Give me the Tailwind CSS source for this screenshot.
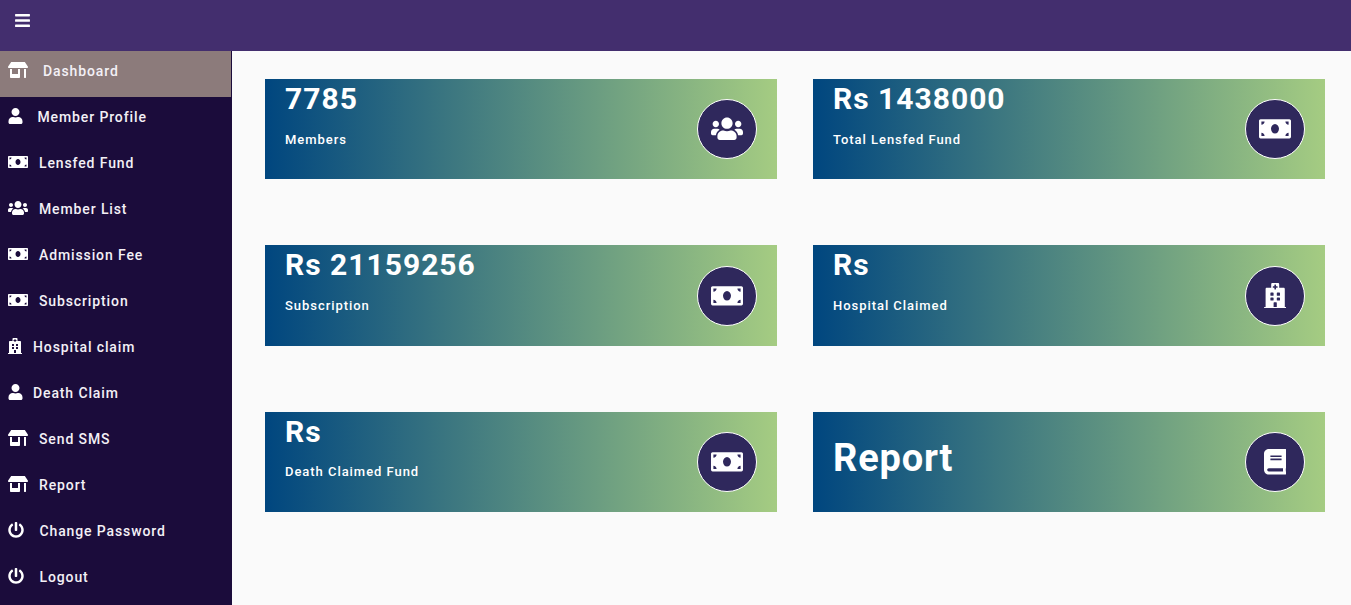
<!DOCTYPE html>
<html>
<head>
<meta charset="utf-8">
<script src="https://cdn.jsdelivr.net/npm/@tailwindcss/browser@4"></script>
</head>
<body class="m-0 h-[605px] w-[1351px] overflow-hidden bg-[#fafafa] font-['Roboto',sans-serif] text-white">
<header class="flex h-[51px] items-start bg-[#432e6e] pl-[15px] pt-[12px]">
  <svg class="h-[17px] w-[15px]" viewBox="0 0 448 512" fill="#fff"><path d="M16 132h416c8.837 0 16-7.163 16-16V76c0-8.837-7.163-16-16-16H16C7.163 60 0 67.163 0 76v40c0 8.837 7.163 16 16 16zm0 160h416c8.837 0 16-7.163 16-16v-40c0-8.837-7.163-16-16-16H16c-8.837 0-16 7.163-16 16v40c0 8.837 7.163 16 16 16zm0 160h416c8.837 0 16-7.163 16-16v-40c0-8.837-7.163-16-16-16H16c-8.837 0-16 7.163-16 16v40c0 8.837 7.163 16 16 16z"/></svg>
</header>
<div class="flex h-[554px]">
  <nav class="h-full w-[232px] shrink-0 bg-[#1b0c3b] text-[14px] font-medium tracking-[0.88px] text-[#f3f0f6]">
    <a class="flex h-[46px] w-[231px] items-center bg-[#8c7b7b] pb-[6px] pl-[8px]"><svg class="mb-[2px] h-[16px] w-[20px]" viewBox="0 0 640 512" fill="#fff"><path d="M320 384H128V224H64v256c0 17.7 14.3 32 32 32h256c17.7 0 32-14.3 32-32V224h-64v160zm314.6-241.8l-85.3-128c-6-8.9-16-14.2-26.7-14.2H117.4c-10.7 0-20.7 5.3-26.6 14.2l-85.3 128c-14.2 21.3 1 49.8 26.6 49.8H608c25.5 0 40.7-28.5 26.6-49.8zM512 496c0 8.8 7.2 16 16 16h32c8.8 0 16-7.2 16-16V224h-64v272z"/></svg><span class="ml-[15px]">Dashboard</span></a>
    <a class="flex h-[46px] items-center pb-[6px] pl-[8px]"><svg class="mb-[2px] h-[16px] w-[15px]" viewBox="0 0 448 512" fill="#fff"><path d="M224 256c70.7 0 128-57.3 128-128S294.7 0 224 0 96 57.3 96 128s57.3 128 128 128zm89.6 32h-16.7c-22.2 10.2-46.9 16-72.9 16s-50.6-5.8-72.9-16h-16.7C60.2 288 0 348.2 0 422.4V464c0 26.5 21.5 48 48 48h352c26.5 0 48-21.5 48-48v-41.6c0-74.2-60.2-134.4-134.4-134.4z"/></svg><span class="ml-[14.5px]">Member Profile</span></a>
    <a class="flex h-[46px] items-center pb-[6px] pl-[8px]"><svg class="mb-[2px] h-[16px] w-[20px]" viewBox="0 0 640 512" fill="#fff"><path d="M608 64H32C14.33 64 0 78.33 0 96v320c0 17.67 14.33 32 32 32h576c17.67 0 32-14.33 32-32V96c0-17.67-14.33-32-32-32zM48 400v-64c35.35 0 64 28.65 64 64H48zm0-224v-64h64c0 35.35-28.65 64-64 64zm272 176c-44.19 0-80-42.99-80-96 0-53.02 35.82-96 80-96s80 42.98 80 96c0 53.03-35.83 96-80 96zm272 48h-64c0-35.35 28.65-64 64-64v64zm0-224c-35.35 0-64-28.65-64-64h64v64z"/></svg><span class="ml-[11px]">Lensfed Fund</span></a>
    <a class="flex h-[46px] items-center pb-[6px] pl-[8px]"><svg class="mb-[2px] h-[16px] w-[20px]" viewBox="0 0 640 512" fill="#fff"><path d="M96 224c35.3 0 64-28.7 64-64s-28.7-64-64-64-64 28.7-64 64 28.7 64 64 64zm448 0c35.3 0 64-28.7 64-64s-28.7-64-64-64-64 28.7-64 64 28.7 64 64 64zm32 32h-64c-17.6 0-33.5 7.1-45.1 18.6 40.3 22.1 68.9 62 75.1 109.4h66c17.7 0 32-14.3 32-32v-32c0-35.3-28.7-64-64-64zm-256 0c61.9 0 112-50.1 112-112S381.9 32 320 32 208 82.1 208 144s50.1 112 112 112zm76.8 32h-8.3c-20.8 10-43.9 16-68.5 16s-47.6-6-68.5-16h-8.3C179.6 288 128 339.6 128 403.2V432c0 26.5 21.5 48 48 48h288c26.5 0 48-21.5 48-48v-28.8c0-63.6-51.6-115.2-115.2-115.2zm-223.7-13.4C161.5 263.1 145.6 256 128 256H64c-35.3 0-64 28.7-64 64v32c0 17.7 14.3 32 32 32h65.9c6.3-47.4 34.9-87.3 75.2-109.4z"/></svg><span class="ml-[11px]">Member List</span></a>
    <a class="flex h-[46px] items-center pb-[6px] pl-[8px]"><svg class="mb-[2px] h-[16px] w-[20px]" viewBox="0 0 640 512" fill="#fff"><path d="M608 64H32C14.33 64 0 78.33 0 96v320c0 17.67 14.33 32 32 32h576c17.67 0 32-14.33 32-32V96c0-17.67-14.33-32-32-32zM48 400v-64c35.35 0 64 28.65 64 64H48zm0-224v-64h64c0 35.35-28.65 64-64 64zm272 176c-44.19 0-80-42.99-80-96 0-53.02 35.82-96 80-96s80 42.98 80 96c0 53.03-35.83 96-80 96zm272 48h-64c0-35.35 28.65-64 64-64v64zm0-224c-35.35 0-64-28.65-64-64h64v64z"/></svg><span class="ml-[11px]">Admission Fee</span></a>
    <a class="flex h-[46px] items-center pb-[6px] pl-[8px]"><svg class="mb-[2px] h-[16px] w-[20px]" viewBox="0 0 640 512" fill="#fff"><path d="M608 64H32C14.33 64 0 78.33 0 96v320c0 17.67 14.33 32 32 32h576c17.67 0 32-14.33 32-32V96c0-17.67-14.33-32-32-32zM48 400v-64c35.35 0 64 28.65 64 64H48zm0-224v-64h64c0 35.35-28.65 64-64 64zm272 176c-44.19 0-80-42.99-80-96 0-53.02 35.82-96 80-96s80 42.98 80 96c0 53.03-35.83 96-80 96zm272 48h-64c0-35.35 28.65-64 64-64v64zm0-224c-35.35 0-64-28.65-64-64h64v64z"/></svg><span class="ml-[11px]">Subscription</span></a>
    <a class="flex h-[46px] items-center pb-[6px] pl-[8px]"><svg class="mb-[2px] h-[16px] w-[14px]" viewBox="0 0 448 512" fill="#fff"><path d="M448 492v20H0v-20c0-6.627 5.373-12 12-12h20V120c0-13.255 10.745-24 24-24h88V24c0-13.255 10.745-24 24-24h112c13.255 0 24 10.745 24 24v72h88c13.255 0 24 10.745 24 24v360h20c6.627 0 12 5.373 12 12zM308 192h-40c-6.627 0-12 5.373-12 12v40c0 6.627 5.373 12 12 12h40c6.627 0 12-5.373 12-12v-40c0-6.627-5.373-12-12-12zm-168 64h40c6.627 0 12-5.373 12-12v-40c0-6.627-5.373-12-12-12h-40c-6.627 0-12 5.373-12 12v40c0 6.627 5.373 12 12 12zm104 128h-40c-6.627 0-12 5.373-12 12v84h64v-84c0-6.627-5.373-12-12-12zm64-96h-40c-6.627 0-12 5.373-12 12v40c0 6.627 5.373 12 12 12h40c6.627 0 12-5.373 12-12v-40c0-6.627-5.373-12-12-12zm-116 12c0-6.627-5.373-12-12-12h-40c-6.627 0-12 5.373-12 12v40c0 6.627 5.373 12 12 12h40c6.627 0 12-5.373 12-12v-40zM182 96h26v26a6 6 0 0 0 6 6h20a6 6 0 0 0 6-6V96h26a6 6 0 0 0 6-6V70a6 6 0 0 0-6-6h-26V38a6 6 0 0 0-6-6h-20a6 6 0 0 0-6 6v26h-26a6 6 0 0 0-6 6v20a6 6 0 0 0 6 6z"/></svg><span class="ml-[11px]">Hospital claim</span></a>
    <a class="flex h-[46px] items-center pb-[6px] pl-[8px]"><svg class="mb-[2px] h-[16px] w-[15px]" viewBox="0 0 448 512" fill="#fff"><path d="M224 256c70.7 0 128-57.3 128-128S294.7 0 224 0 96 57.3 96 128s57.3 128 128 128zm89.6 32h-16.7c-22.2 10.2-46.9 16-72.9 16s-50.6-5.8-72.9-16h-16.7C60.2 288 0 348.2 0 422.4V464c0 26.5 21.5 48 48 48h352c26.5 0 48-21.5 48-48v-41.6c0-74.2-60.2-134.4-134.4-134.4z"/></svg><span class="ml-[10px]">Death Claim</span></a>
    <a class="flex h-[46px] items-center pb-[6px] pl-[8px]"><svg class="mb-[2px] h-[16px] w-[20px]" viewBox="0 0 640 512" fill="#fff"><path d="M320 384H128V224H64v256c0 17.7 14.3 32 32 32h256c17.7 0 32-14.3 32-32V224h-64v160zm314.6-241.8l-85.3-128c-6-8.9-16-14.2-26.7-14.2H117.4c-10.7 0-20.7 5.3-26.6 14.2l-85.3 128c-14.2 21.3 1 49.8 26.6 49.8H608c25.5 0 40.7-28.5 26.6-49.8zM512 496c0 8.8 7.2 16 16 16h32c8.8 0 16-7.2 16-16V224h-64v272z"/></svg><span class="ml-[11px]">Send SMS</span></a>
    <a class="flex h-[46px] items-center pb-[6px] pl-[8px]"><svg class="mb-[2px] h-[16px] w-[20px]" viewBox="0 0 640 512" fill="#fff"><path d="M320 384H128V224H64v256c0 17.7 14.3 32 32 32h256c17.7 0 32-14.3 32-32V224h-64v160zm314.6-241.8l-85.3-128c-6-8.9-16-14.2-26.7-14.2H117.4c-10.7 0-20.7 5.3-26.6 14.2l-85.3 128c-14.2 21.3 1 49.8 26.6 49.8H608c25.5 0 40.7-28.5 26.6-49.8zM512 496c0 8.8 7.2 16 16 16h32c8.8 0 16-7.2 16-16V224h-64v272z"/></svg><span class="ml-[11px]">Report</span></a>
    <a class="flex h-[46px] items-center pb-[6px] pl-[8px]"><svg class="mb-[2px] h-[16px] w-[16px]" viewBox="0 0 512 512" fill="#fff"><path d="M400 54.1c63 45 104 118.6 104 201.9 0 136.8-110.8 247.7-247.5 248C120 504.3 8.2 393 8 256.4 7.9 173.1 48.9 99.3 111.8 54.2c11.7-8.3 28-4.8 35 7.7L162.6 90c5.9 10.5 3.1 23.8-6.6 31-41.5 30.8-68 79.6-68 134.9-.1 92.3 74.5 168.1 168 168.1 91.6 0 168.6-74.2 168-169.1-.3-51.8-24.7-101.8-68.1-134-9.7-7.2-12.4-20.5-6.5-30.9l15.8-28.1c7-12.4 23.2-16.1 34.8-7.8zM296 264V24c0-13.3-10.7-24-24-24h-32c-13.3 0-24 10.7-24 24v240c0 13.3 10.7 24 24 24h32c13.3 0 24-10.7 24-24z"/></svg><span class="ml-[15.5px]">Change Password</span></a>
    <a class="flex h-[46px] items-center pb-[6px] pl-[8px]"><svg class="mb-[2px] h-[16px] w-[16px]" viewBox="0 0 512 512" fill="#fff"><path d="M400 54.1c63 45 104 118.6 104 201.9 0 136.8-110.8 247.7-247.5 248C120 504.3 8.2 393 8 256.4 7.9 173.1 48.9 99.3 111.8 54.2c11.7-8.3 28-4.8 35 7.7L162.6 90c5.9 10.5 3.1 23.8-6.6 31-41.5 30.8-68 79.6-68 134.9-.1 92.3 74.5 168.1 168 168.1 91.6 0 168.6-74.2 168-169.1-.3-51.8-24.7-101.8-68.1-134-9.7-7.2-12.4-20.5-6.5-30.9l15.8-28.1c7-12.4 23.2-16.1 34.8-7.8zM296 264V24c0-13.3-10.7-24-24-24h-32c-13.3 0-24 10.7-24 24v240c0 13.3 10.7 24 24 24h32c13.3 0 24-10.7 24-24z"/></svg><span class="ml-[15.5px]">Logout</span></a>
  </nav>
  <main class="grid flex-1 grid-cols-2 content-start gap-x-[36px] gap-y-[66.2px] pl-[33px] pr-[26px] pt-[28px]">
    <div class="flex h-[100.2px] items-center justify-between bg-linear-to-r/srgb from-[#00467f] to-[#a5cc82] pl-[20px] pr-[20px]">
      <div class="self-start"><div class="text-[30px] font-bold leading-[39px] tracking-[1px]">7785</div><div class="mt-[12.6px] text-[13px] font-medium leading-[18px] tracking-[0.95px]">Members</div></div>
      <div class="mt-[0.4px] flex h-[60px] w-[60px] items-center justify-center rounded-full border border-white bg-[#2f285c]"><svg class="h-[25.6px] w-[32px]" viewBox="0 0 640 512" fill="#fff"><path d="M96 224c35.3 0 64-28.7 64-64s-28.7-64-64-64-64 28.7-64 64 28.7 64 64 64zm448 0c35.3 0 64-28.7 64-64s-28.7-64-64-64-64 28.7-64 64 28.7 64 64 64zm32 32h-64c-17.6 0-33.5 7.1-45.1 18.6 40.3 22.1 68.9 62 75.1 109.4h66c17.7 0 32-14.3 32-32v-32c0-35.3-28.7-64-64-64zm-256 0c61.9 0 112-50.1 112-112S381.9 32 320 32 208 82.1 208 144s50.1 112 112 112zm76.8 32h-8.3c-20.8 10-43.9 16-68.5 16s-47.6-6-68.5-16h-8.3C179.6 288 128 339.6 128 403.2V432c0 26.5 21.5 48 48 48h288c26.5 0 48-21.5 48-48v-28.8c0-63.6-51.6-115.2-115.2-115.2zm-223.7-13.4C161.5 263.1 145.6 256 128 256H64c-35.3 0-64 28.7-64 64v32c0 17.7 14.3 32 32 32h65.9c6.3-47.4 34.9-87.3 75.2-109.4z"/></svg></div>
    </div>
    <div class="flex h-[100.2px] items-center justify-between bg-linear-to-r/srgb from-[#00467f] to-[#a5cc82] pl-[20px] pr-[20px]">
      <div class="self-start"><div class="text-[30px] font-bold leading-[39px] tracking-[1px]">Rs 1438000</div><div class="mt-[12.6px] text-[13px] font-medium leading-[18px] tracking-[0.95px]">Total Lensfed Fund</div></div>
      <div class="mt-[0.4px] flex h-[60px] w-[60px] items-center justify-center rounded-full border border-white bg-[#2f285c]"><svg class="h-[25.6px] w-[32px]" viewBox="0 0 640 512" fill="#fff"><path d="M608 64H32C14.33 64 0 78.33 0 96v320c0 17.67 14.33 32 32 32h576c17.67 0 32-14.33 32-32V96c0-17.67-14.33-32-32-32zM48 400v-64c35.35 0 64 28.65 64 64H48zm0-224v-64h64c0 35.35-28.65 64-64 64zm272 176c-44.19 0-80-42.99-80-96 0-53.02 35.82-96 80-96s80 42.98 80 96c0 53.03-35.83 96-80 96zm272 48h-64c0-35.35 28.65-64 64-64v64zm0-224c-35.35 0-64-28.65-64-64h64v64z"/></svg></div>
    </div>
    <div class="flex h-[100.2px] items-center justify-between bg-linear-to-r/srgb from-[#00467f] to-[#a5cc82] pl-[20px] pr-[20px]">
      <div class="self-start"><div class="text-[30px] font-bold leading-[39px] tracking-[1px]">Rs 21159256</div><div class="mt-[12.6px] text-[13px] font-medium leading-[18px] tracking-[0.95px]">Subscription</div></div>
      <div class="mt-[0.4px] flex h-[60px] w-[60px] items-center justify-center rounded-full border border-white bg-[#2f285c]"><svg class="h-[25.6px] w-[32px]" viewBox="0 0 640 512" fill="#fff"><path d="M608 64H32C14.33 64 0 78.33 0 96v320c0 17.67 14.33 32 32 32h576c17.67 0 32-14.33 32-32V96c0-17.67-14.33-32-32-32zM48 400v-64c35.35 0 64 28.65 64 64H48zm0-224v-64h64c0 35.35-28.65 64-64 64zm272 176c-44.19 0-80-42.99-80-96 0-53.02 35.82-96 80-96s80 42.98 80 96c0 53.03-35.83 96-80 96zm272 48h-64c0-35.35 28.65-64 64-64v64zm0-224c-35.35 0-64-28.65-64-64h64v64z"/></svg></div>
    </div>
    <div class="flex h-[100.2px] items-center justify-between bg-linear-to-r/srgb from-[#00467f] to-[#a5cc82] pl-[20px] pr-[20px]">
      <div class="self-start"><div class="text-[30px] font-bold leading-[39px] tracking-[1px]">Rs</div><div class="mt-[12.6px] text-[13px] font-medium leading-[18px] tracking-[0.95px]">Hospital Claimed</div></div>
      <div class="mt-[0.4px] flex h-[60px] w-[60px] items-center justify-center rounded-full border border-white bg-[#2f285c]"><svg class="h-[25.6px] w-[22.4px]" viewBox="0 0 448 512" fill="#fff"><path d="M448 492v20H0v-20c0-6.627 5.373-12 12-12h20V120c0-13.255 10.745-24 24-24h88V24c0-13.255 10.745-24 24-24h112c13.255 0 24 10.745 24 24v72h88c13.255 0 24 10.745 24 24v360h20c6.627 0 12 5.373 12 12zM308 192h-40c-6.627 0-12 5.373-12 12v40c0 6.627 5.373 12 12 12h40c6.627 0 12-5.373 12-12v-40c0-6.627-5.373-12-12-12zm-168 64h40c6.627 0 12-5.373 12-12v-40c0-6.627-5.373-12-12-12h-40c-6.627 0-12 5.373-12 12v40c0 6.627 5.373 12 12 12zm104 128h-40c-6.627 0-12 5.373-12 12v84h64v-84c0-6.627-5.373-12-12-12zm64-96h-40c-6.627 0-12 5.373-12 12v40c0 6.627 5.373 12 12 12h40c6.627 0 12-5.373 12-12v-40c0-6.627-5.373-12-12-12zm-116 12c0-6.627-5.373-12-12-12h-40c-6.627 0-12 5.373-12 12v40c0 6.627 5.373 12 12 12h40c6.627 0 12-5.373 12-12v-40zM182 96h26v26a6 6 0 0 0 6 6h20a6 6 0 0 0 6-6V96h26a6 6 0 0 0 6-6V70a6 6 0 0 0-6-6h-26V38a6 6 0 0 0-6-6h-20a6 6 0 0 0-6 6v26h-26a6 6 0 0 0-6 6v20a6 6 0 0 0 6 6z"/></svg></div>
    </div>
    <div class="flex h-[100.2px] items-center justify-between bg-linear-to-r/srgb from-[#00467f] to-[#a5cc82] pl-[20px] pr-[20px]">
      <div class="self-start"><div class="text-[30px] font-bold leading-[39px] tracking-[1px]">Rs</div><div class="mt-[12.6px] text-[13px] font-medium leading-[18px] tracking-[0.95px]">Death Claimed Fund</div></div>
      <div class="mt-[0.4px] flex h-[60px] w-[60px] items-center justify-center rounded-full border border-white bg-[#2f285c]"><svg class="h-[25.6px] w-[32px]" viewBox="0 0 640 512" fill="#fff"><path d="M608 64H32C14.33 64 0 78.33 0 96v320c0 17.67 14.33 32 32 32h576c17.67 0 32-14.33 32-32V96c0-17.67-14.33-32-32-32zM48 400v-64c35.35 0 64 28.65 64 64H48zm0-224v-64h64c0 35.35-28.65 64-64 64zm272 176c-44.19 0-80-42.99-80-96 0-53.02 35.82-96 80-96s80 42.98 80 96c0 53.03-35.83 96-80 96zm272 48h-64c0-35.35 28.65-64 64-64v64zm0-224c-35.35 0-64-28.65-64-64h64v64z"/></svg></div>
    </div>
    <div class="flex h-[100.2px] items-center justify-between bg-linear-to-r/srgb from-[#00467f] to-[#a5cc82] pl-[20px] pr-[20px]">
      <div class="mb-[8px] text-[38px] font-bold leading-[46px] tracking-[0.8px]">Report</div>
      <div class="mt-[0.4px] flex h-[60px] w-[60px] items-center justify-center rounded-full border border-white bg-[#2f285c]"><svg class="h-[25.6px] w-[22.4px]" viewBox="0 0 448 512" fill="#fff"><path d="M448 360V24c0-13.3-10.7-24-24-24H96C43 0 0 43 0 96v320c0 53 43 96 96 96h328c13.3 0 24-10.7 24-24v-16c0-7.5-3.5-14.3-8.9-18.7-4.2-15.4-4.2-59.3 0-74.7 5.4-4.3 8.9-11.1 8.9-18.6zM128 134c0-3.3 2.7-6 6-6h212c3.3 0 6 2.7 6 6v20c0 3.3-2.7 6-6 6H134c-3.3 0-6-2.7-6-6v-20zm0 64c0-3.3 2.7-6 6-6h212c3.3 0 6 2.7 6 6v20c0 3.3-2.7 6-6 6H134c-3.3 0-6-2.7-6-6v-20zm253.4 250H96c-17.7 0-32-14.3-32-32 0-17.6 14.4-32 32-32h285.4c-1.9 17.1-1.9 46.9 0 64z"/></svg></div>
    </div>
  </main>
</div>
</body>
</html>
